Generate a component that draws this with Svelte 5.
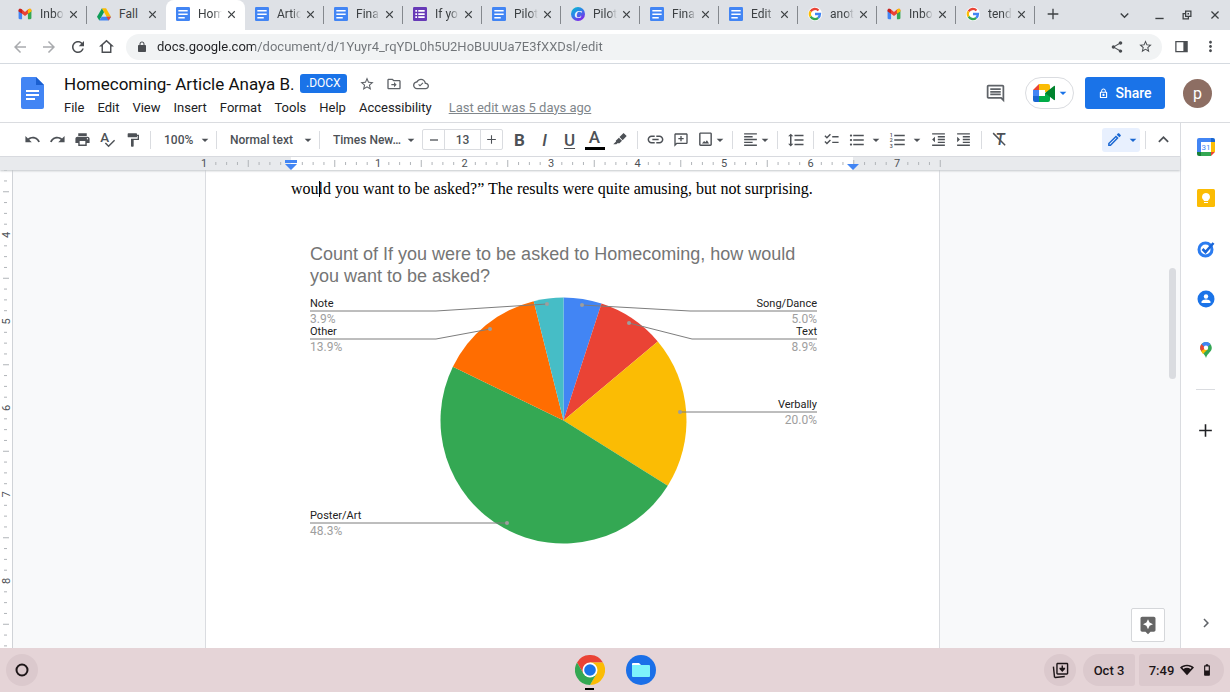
<script>
	let tabs = [
		{ icon: "gmail", name: "Inbo" },
		{ icon: "drive", name: "Fall" },
		{ icon: "doc", name: "Hom", active: true },
		{ icon: "doc", name: "Artic" },
		{ icon: "doc", name: "Fina" },
		{ icon: "form", name: "If yo" },
		{ icon: "doc", name: "Pilot" },
		{ icon: "canva", name: "Pilot" },
		{ icon: "doc", name: "Fina" },
		{ icon: "doc", name: "Edit" },
		{ icon: "google", name: "anot" },
		{ icon: "gmail", name: "Inbo" },
		{ icon: "google", name: "tend" }
	]
	let menus = ["File", "Edit", "View", "Insert", "Format", "Tools", "Help", "Accessibility"]
	let url = $state("docs.google.com/document/d/1Yuyr4_rqYDL0h5U2HoBUUUa7E3fXXDsl/edit")
	let title = $state("Homecoming- Article Anaya B.")
	let fontSize = $state(13)

	// 24px grid icons
	const paths = {
		back: "M20 11H7.83l5.59-5.59L12 4l-8 8 8 8 1.41-1.41L7.83 13H20v-2z",
		forward: "M12 4l-1.41 1.41L16.17 11H4v2h12.17l-5.58 5.59L12 20l8-8z",
		reload: "M17.65 6.35C16.2 4.9 14.21 4 12 4c-4.42 0-7.99 3.58-7.99 8s3.57 8 7.99 8c3.73 0 6.84-2.55 7.73-6h-2.08c-.82 2.33-3.04 4-5.65 4-3.31 0-6-2.69-6-6s2.69-6 6-6c1.66 0 3.14.69 4.22 1.78L13 11h7V4l-2.35 2.35z",
		home: "M12 2.5L1.5 12H5v9h14v-9h3.5L12 2.5zM12 5.2l5 4.6V19H7V9.8z",
		lock: "M18 8h-1V6c0-2.76-2.24-5-5-5S7 3.24 7 6v2H6c-1.1 0-2 .9-2 2v10c0 1.1.9 2 2 2h12c1.1 0 2-.9 2-2V10c0-1.1-.9-2-2-2zM9 6c0-1.66 1.34-3 3-3s3 1.34 3 3v2H9V6z",
		lockOpen: "M18 8h-1V6c0-2.76-2.24-5-5-5S7 3.24 7 6v2H6c-1.1 0-2 .9-2 2v10c0 1.1.9 2 2 2h12c1.1 0 2-.9 2-2V10c0-1.1-.9-2-2-2zM9 6c0-1.66 1.34-3 3-3s3 1.34 3 3v2H9V6zm8.5 13.5H6.5V10.5h11v9zM12 17.5c1.4 0 2.5-1.1 2.5-2.5s-1.1-2.5-2.5-2.5-2.5 1.1-2.5 2.5 1.1 2.5 2.5 2.5z",
		share: "M18 16.08c-.76 0-1.44.3-1.96.77L8.91 12.7c.05-.23.09-.46.09-.7s-.04-.47-.09-.7l7.05-4.11c.54.5 1.25.81 2.04.81 1.66 0 3-1.34 3-3s-1.34-3-3-3-3 1.34-3 3c0 .24.04.47.09.7L8.04 9.81C7.5 9.31 6.79 9 6 9c-1.66 0-3 1.34-3 3s1.34 3 3 3c.79 0 1.5-.31 2.04-.81l7.12 4.16c-.05.21-.08.43-.08.65 0 1.61 1.31 2.92 2.92 2.92s2.92-1.31 2.92-2.92-1.31-2.92-2.92-2.92z",
		star: "M22 9.24l-7.19-.62L12 2 9.19 8.63 2 9.24l5.46 4.73L5.82 21 12 17.27 18.18 21l-1.63-7.03L22 9.24zM12 15.4l-3.76 2.27 1-4.28-3.32-2.88 4.38-.38L12 6.1l1.71 4.04 4.38.38-3.32 2.88 1 4.28L12 15.4z",
		panel: "M2 3v18h20V3H2zm2 2h11v14H4V5z",
		dots: "M12 8c1.1 0 2-.9 2-2s-.9-2-2-2-2 .9-2 2 .9 2 2 2zm0 2c-1.1 0-2 .9-2 2s.9 2 2 2 2-.9 2-2-.9-2-2-2zm0 6c-1.1 0-2 .9-2 2s.9 2 2 2 2-.9 2-2-.9-2-2-2z",
		close: "M20 5.8L18.2 4 12 10.2 5.8 4 4 5.8 10.2 12 4 18.2 5.8 20 12 13.8 18.2 20 20 18.2 13.8 12z",
		plus: "M20 13h-7v7h-2v-7H4v-2h7V4h2v7h7v2z",
		minus: "M20 13.3H4v-2.6h16z",
		min: "M3 17h18v3H3z",
		restore: "M8 3v5H3v13h13v-5h5V3H8zm2.5 2.5h8v8h-8v-8zM5.5 10.5H8V16h5.5v2.5h-8v-8zM13 8v3h3V8z",
		down: "M16.59 8.59L12 13.17 7.41 8.59 6 10l6 6 6-6z",
		up: "M12 8l-6 6 1.41 1.41L12 10.83l4.59 4.58L18 14z",
		right: "M10 6L8.59 7.41 13.17 12l-4.58 4.59L10 18l6-6z",
		caret: "M2 8h20L12 18z",
		move: "M20 6h-8l-2-2H4c-1.1 0-2 .9-2 2v12c0 1.1.9 2 2 2h16c1.1 0 2-.9 2-2V8c0-1.1-.9-2-2-2zm0 12H4V6h5.17l2 2H20v10zm-8-1l4-4-4-4v3H8v2h4z",
		cloud: "M19.35 10.04C18.67 6.59 15.64 4 12 4 9.11 4 6.61 5.64 5.36 8.04 2.35 8.36 0 10.9 0 14c0 3.31 2.69 6 6 6h13c2.76 0 5-2.24 5-5 0-2.64-2.05-4.78-4.65-4.96zM19 18H6c-2.21 0-4-1.79-4-4 0-2.05 1.53-3.76 3.56-3.97l1.07-.11.5-.95C8.08 7.14 9.94 6 12 6c2.62 0 4.88 1.86 5.39 4.43l.3 1.5 1.53.11c1.56.1 2.78 1.41 2.78 2.96 0 1.65-1.35 3-3 3zm-8.5-4.5l-1.5-1.5-1.2 1.2 2.7 2.7 5-5-1.2-1.2z",
		comment: "M22 4c0-1.1-.9-2-2-2H4c-1.1 0-2 .9-2 2v12c0 1.1.9 2 2 2h14l4 4V4zM20 4v13.17L18.83 16H4V4h16zM6 12h12v2H6zm0-3h12v2H6zm0-3h12v2H6z",
		undo: "M12.5 8c-2.65 0-5.05.99-6.9 2.6L2 7v9h9l-3.62-3.62c1.39-1.16 3.16-1.88 5.12-1.88 3.54 0 6.55 2.31 7.6 5.5l2.37-.78C21.08 11.03 17.15 8 12.5 8z",
		redo: "M18.4 10.6C16.55 8.99 14.15 8 11.5 8c-4.65 0-8.58 3.03-9.96 7.22L3.9 16c1.05-3.19 4.05-5.5 7.6-5.5 1.95 0 3.73.72 5.12 1.88L13 16h9V7l-3.6 3.6z",
		print: "M19 8H5c-1.66 0-3 1.34-3 3v6h4v4h12v-4h4v-6c0-1.66-1.34-3-3-3zm-3 11H8v-5h8v5zm3-7c-.55 0-1-.45-1-1s.45-1 1-1 1 .45 1 1-.45 1-1 1zm-1-9H6v4h12V3z",
		paint: "M18 4V3c0-.55-.45-1-1-1H5c-.55 0-1 .45-1 1v4c0 .55.45 1 1 1h12c.55 0 1-.45 1-1V6h1v4H9v11c0 .55.45 1 1 1h2c.55 0 1-.45 1-1v-9h8V4h-3z",
		marker: "M6 14l5-5 5 5-4 4H8.5L7 19.5H2L6.5 15zM12 8l6.5-6.5 5 5L17 13z",
		link: "M3.9 12c0-1.71 1.39-3.1 3.1-3.1h4V7H7c-2.76 0-5 2.24-5 5s2.24 5 5 5h4v-1.9H7c-1.71 0-3.1-1.39-3.1-3.1zM8 13h8v-2H8v2zm9-6h-4v1.9h4c1.71 0 3.1 1.39 3.1 3.1s-1.39 3.1-3.1 3.1h-4V17h4c2.76 0 5-2.24 5-5s-2.24-5-5-5z",
		addComment: "M20 2H4c-1.1 0-2 .9-2 2v18l4-4h14c1.1 0 2-.9 2-2V4c0-1.1-.9-2-2-2zm0 14H5.2L4 17.2V4h16v12zM11 14h2v-3h3V9h-3V6h-2v3H8v2h3z",
		image: "M19 4v15H5V4h14m0-2H5c-1.1 0-2 .9-2 2v15c0 1.1.9 2 2 2h14c1.1 0 2-.9 2-2V4c0-1.1-.9-2-2-2zm-5 11l-2.2 2.8L10 14l-3 3.5h10z",
		align: "M15 15H3v2h12v-2zm0-8H3v2h12V7zM3 13h18v-2H3v2zm0 8h18v-2H3v2zM3 3v2h18V3H3z",
		spacing: "M6 7h2.5L5 3.5 1.5 7H4v10H1.5L5 20.5 8.5 17H6V7zm4-2v2h12V5H10zm0 14h12v-2H10v2zm0-6h12v-2H10v2z",
		checklist: "M22 7h-9v2h9V7zm0 8h-9v2h9v-2zM5.54 11L2 7.46l1.41-1.41 2.12 2.12 4.24-4.24 1.41 1.41L5.54 11zm0 8L2 15.46l1.41-1.41 2.12 2.12 4.24-4.24 1.41 1.41L5.54 19z",
		bullets: "M4 10.5c-.83 0-1.5.67-1.5 1.5s.67 1.5 1.5 1.5 1.5-.67 1.5-1.5-.67-1.5-1.5-1.5zm0-6c-.83 0-1.5.67-1.5 1.5S3.17 7.5 4 7.5 5.5 6.83 5.5 6 4.83 4.5 4 4.5zm0 12c-.83 0-1.5.68-1.5 1.5s.68 1.5 1.5 1.5 1.5-.68 1.5-1.5-.67-1.5-1.5-1.5zM7 19h14v-2H7v2zm0-6h14v-2H7v2zm0-8v2h14V5H7z",
		outdent: "M11 17h10v-2H11v2zm-8-5l4 4V8l-4 4zm0 9h18v-2H3v2zM3 3v2h18V3H3zm8 6h10V7H11v2zm0 4h10v-2H11v2z",
		indent: "M3 21h18v-2H3v2zM3 8v8l4-4-4-4zm8 9h10v-2H11v2zM3 3v2h18V3H3zm8 6h10V7H11v2zm0 4h10v-2H11v2z",
		edit: "M14.06 9.02l.92.92L5.92 19H5v-.92l9.06-9.06M17.66 3c-.25 0-.51.1-.7.29l-1.83 1.83 3.75 3.75 1.83-1.83c.39-.39.39-1.02 0-1.41l-2.34-2.34c-.2-.2-.45-.29-.71-.29zm-3.6 3.19L3 17.25V21h3.75L17.81 9.94l-3.75-3.75z",
		explore: "M19 2H5c-1.1 0-2 .9-2 2v14c0 1.1.9 2 2 2h4l3 3 3-3h4c1.1 0 2-.9 2-2V4c0-1.1-.9-2-2-2zm-5.1 10.9L12 17l-1.9-4.1L6 11l4.1-1.9L12 5l1.9 4.1L18 11z",
		wifi: "M12 21L0 7.5C3.2 4.8 7.3 3 12 3s8.800 1.800 12 4.500zM4 8l2 2.200c1.700-1.200 3.800-2 6-2s4.300.8 6 2L20 8c-2.300-1.600-5-2.500-8-2.500S6.300 6.400 4 8z",
		battery: "M15.7 4H14V2h-4v2H8.3C7.6 4 7 4.6 7 5.3v15.4c0 .7.6 1.3 1.3 1.3h7.4c.7 0 1.3-.6 1.3-1.3V5.3c0-.7-.6-1.3-1.3-1.3zM15 13H9V6h6z",
		tote: "M21 1H8C6.9 1 6 1.9 6 3v13c0 1.1.9 2 2 2h13c1.1 0 2-.9 2-2V3c0-1.1-.9-2-2-2zm0 15H8V3h13zM13.5 5v3H10.5v2l4 4 4-4V8h-3V5zM3 6.5L1 6.7l1.5 14.5c.1 1.1 1 1.8 2.1 1.7L18 21.5v-2L4.500 20.800z"
	}

	// rulers, one inch is 86.5px
	const inch = 86.5
	const kind = (eighth) => eighth % 8 == 0 ? "num" : eighth % 4 == 0 ? "mid" : "small"
	let hticks = []
	for (let i = 1; i <= 68; i++) {
		hticks.push({ pos: (i * inch) / 8, n: i / 8 - 1, kind: kind(i) })
	}
	let vticks = []
	for (let i = 26; i < 120; i++) {
		vticks.push({ pos: (i * inch) / 8 - 281, n: i / 8, kind: kind(i) })
	}

	// pie chart
	const cx = 272.5, cy = 188.5, r = 123
	let answers = [
		{ name: "Song/Dance", value: 5.0, color: "#4285f4", y: 79, line: "526,79 399,79 291,73" },
		{ name: "Text", value: 8.9, color: "#ea4335", y: 107, line: "526,107 401,107 338,91" },
		{ name: "Verbally", value: 20.0, color: "#fbbc04", y: 180, line: "526,180 389,180" },
		{ name: "Poster/Art", value: 48.3, color: "#34a853", y: 291, left: true, line: "19,291 216,291" },
		{ name: "Other", value: 13.9, color: "#ff6d01", y: 107, left: true, line: "19,107 145,107 199,97" },
		{ name: "Note", value: 3.9, color: "#46bdc6", y: 79, left: true, line: "19,79 145,79 256,72" }
	]
	const point = (part) => {
		let a = part * 2 * Math.PI
		return `${cx + r * Math.sin(a)} ${cy - r * Math.cos(a)}`
	}
	let sum = 0
	let slices = answers.map((a) => {
		let from = sum / 100
		sum += a.value
		return { ...a, d: `M${cx} ${cy}L${point(from)}A${r} ${r} 0 0 1 ${point(sum / 100)}Z`, dot: a.line.split(" ").pop().split(",") }
	})
</script>

<style>
	:global(body) {
		margin: 0;
		font-family: Roboto, "Liberation Sans", sans-serif;
		color: #202124;
	}
	svg {
		display: block;
		flex: none;
		fill: currentColor;
	}
	button, input, select {
		font: inherit;
		color: inherit;
		background: none;
		border: 0;
		padding: 0;
		margin: 0;
		outline: none;
	}
	button {
		display: flex;
		align-items: center;
		justify-content: center;
		flex: none;
		cursor: pointer;
	}
	input {
		min-width: 0;
	}
	.screen {
		height: 100vh;
		display: flex;
		flex-direction: column;
		overflow: hidden;
		background-color: #fff;
	}

	/* browser */
	.tabs {
		height: 30px;
		display: flex;
		flex: none;
		padding-left: 8px;
		background-color: #dee1e6;
		color: #3c4043;
	}
	.tab {
		box-sizing: border-box;
		width: 79px;
		display: flex;
		flex: none;
		align-items: center;
		padding: 0 0 2px 10px;
		font-size: 12px;
		background: linear-gradient(#84888d, #84888d) right center / 1px 18px no-repeat;
	}
	.tab.before {
		background: none;
	}
	.tab.active {
		background: #fff;
		border-radius: 8px 8px 0 0;
	}
	.tab_name {
		width: 24px;
		margin: 0 4px 0 8px;
		white-space: nowrap;
		mask-image: linear-gradient(90deg, #000 15px, transparent);
	}
	.tab_name.full {
		mask-image: none;
	}
	.new_tab {
		width: 36px;
		padding-bottom: 2px;
	}
	.window {
		display: flex;
		margin: 0 1px 0 auto;
	}
	.window button {
		width: 28px;
	}
	.window button:first-child {
		margin-right: 7px;
	}
	.address_bar {
		height: 33px;
		display: flex;
		flex: none;
		align-items: center;
		padding: 0 5px;
		border-bottom: 1px solid #d5dae0;
		color: #4a4d51;
	}
	.address_bar > button {
		width: 29px;
	}
	.address_bar > button:disabled {
		color: #a9abae;
	}
	.address {
		flex: 1;
		height: 26px;
		display: flex;
		align-items: center;
		margin: 0 5px;
		padding: 0 2px 0 10px;
		border-radius: 13px;
		background-color: #f1f3f4;
	}
	.address input {
		flex: 1;
		margin-left: 9px;
		font-size: 13px;
		background: linear-gradient(90deg, #202124 98px, #707478 98px);
		background-clip: text;
		color: transparent;
	}
	.address button {
		width: 29px;
	}

	/* document header */
	.header {
		height: 58px;
		display: flex;
		flex: none;
		align-items: center;
		padding: 0 18px 0 21px;
		border-bottom: 1px solid #dadce0;
	}
	.names {
		flex: 1;
		margin: 4px 0 0 20px;
	}
	.title_row {
		height: 24px;
		display: flex;
		align-items: center;
		color: #5f6368;
	}
	.title_row input {
		width: 236px;
		font-size: 17px;
		color: #111;
	}
	.title_row button {
		width: 27px;
	}
	.badge {
		height: 19px;
		line-height: 19px;
		padding: 0 6px;
		margin-right: 7px;
		border-radius: 3px;
		background-color: #1a73e8;
		color: #fff;
		font-size: 12px;
	}
	.menu_row {
		height: 23px;
		display: flex;
		align-items: center;
		gap: 13px;
		font-size: 13px;
	}
	.menu_row a {
		margin-left: 4px;
		color: #80868b;
	}
	.comments {
		color: #5f6368;
	}
	.meet {
		width: 49px;
		height: 32px;
		gap: 4px;
		margin: 0 11px 0 19px;
		border: 1px solid #dadce0;
		border-radius: 16px;
		color: #1a73e8;
		box-sizing: border-box;
	}
	.share {
		width: 80px;
		height: 32px;
		gap: 6px;
		border-radius: 3px;
		background-color: #1a73e8;
		color: #fff;
		font-size: 14px;
		font-weight: 500;
	}
	.avatar {
		width: 29px;
		height: 29px;
		margin-left: 18px;
		border-radius: 50%;
		background-color: #8d6e63;
		color: #fff;
		font-size: 16px;
	}

	/* toolbar */
	.work {
		flex: 1;
		display: flex;
		min-height: 0;
	}
	.editor {
		flex: 1;
		display: flex;
		flex-direction: column;
		min-width: 0;
		position: relative;
	}
	.toolbar {
		height: 33px;
		display: flex;
		flex: none;
		align-items: center;
		padding: 0 4px 0 20px;
		border-bottom: 1px solid #dadce0;
		color: #4d5156;
		font-size: 12px;
		font-weight: 500;
	}
	.toolbar button {
		width: 25px;
		height: 24px;
	}
	.toolbar .more {
		width: 14px;
		margin-left: -5px;
	}
	.toolbar .more.far {
		margin: 0 2px 0 0;
	}
	.toolbar .letter {
		font-size: 17px;
		line-height: 20px;
	}
	.letter u {
		text-underline-offset: 2px;
	}
	.letter .ink {
		width: 20px;
		height: 17px;
		line-height: 15px;
		border-bottom: 3px solid #000;
	}
	.sep {
		width: 1px;
		height: 18px;
		flex: none;
		margin: 0 5px;
		background-color: #dadce0;
	}
	.drop {
		width: 92px;
		display: flex;
		align-items: center;
		position: relative;
	}
	.drop.zoom {
		width: 55px;
	}
	.drop select {
		width: 100%;
		appearance: none;
		padding-left: 8px;
	}
	.drop svg {
		position: absolute;
		right: 2px;
		pointer-events: none;
	}
	.size {
		display: flex;
		margin: 0 4px 0 5px;
		border: 1px solid #dadce0;
		border-radius: 2px;
	}
	.size button {
		width: 21px;
		height: 19px;
	}
	.size input {
		width: 35px;
		text-align: center;
		border: solid #dadce0;
		border-width: 0 1px;
	}
	.toolbar .mode {
		width: 38px;
		gap: 6px;
		margin-left: auto;
		border-radius: 3px;
		background-color: #e8f0fe;
		color: #1967d2;
	}

	/* rulers and page */
	.ruler {
		height: 13px;
		display: flex;
		flex: none;
		justify-content: center;
		padding: 0 48px 0 13px;
		background-color: #e8eaed;
		box-shadow: 0 1px 2px #c4c7cb;
		z-index: 1;
	}
	.ruler svg, .side_ruler svg {
		overflow: visible;
	}
	.tick {
		stroke: #b0b4b8;
	}
	.number {
		font-size: 11px;
		text-anchor: middle;
		fill: #4d5156;
	}
	.canvas {
		flex: 1;
		display: flex;
		min-height: 0;
		background-color: #f8f9fa;
	}
	.side_ruler {
		width: 12px;
		flex: none;
		overflow: hidden;
		border-right: 1px solid #d0d3d7;
		background-color: #fff;
	}
	.paper {
		flex: 1;
		display: flex;
		justify-content: center;
		padding-right: 48px;
		overflow: hidden;
	}
	.page {
		box-sizing: border-box;
		width: 735px;
		flex: none;
		padding: 9px 85px 0 85px;
		border: solid #dadce0;
		border-width: 0 1px;
		background-color: #fff;
	}
	.page p {
		margin: 0;
		font: 16px/20px "Liberation Serif", serif;
		color: #000;
		white-space: nowrap;
	}
	.cursor {
		display: inline-block;
		width: 1px;
		height: 16px;
		margin-right: -1px;
		vertical-align: -3px;
		background-color: #000;
	}
	.chart {
		margin: 33px 0 0;
		display: grid;
	}
	.chart figcaption, .chart svg {
		grid-area: 1 / 1;
	}
	.chart figcaption {
		padding: 11px 40px 11px 19px;
		font-size: 18px;
		line-height: 22px;
		font-family: "Liberation Sans", Arial, sans-serif;
		color: #757575;
	}
	.chart text {
		font-size: 11px;
		fill: #222;
	}
	.chart .percent {
		font-size: 12px;
		fill: #9e9e9e;
	}
	.chart .end {
		text-anchor: end;
	}
	.leader {
		fill: none;
		stroke: #7d7d7d;
	}
	.dot {
		fill: #9e9e9e;
	}
	.scroll {
		position: absolute;
		top: 145px;
		right: 4px;
		width: 7px;
		height: 111px;
		border-radius: 4px;
		background-color: #dadce0;
	}
	.explore {
		position: absolute;
		right: 15px;
		bottom: 6px;
		width: 34px;
		height: 34px;
		border: 1px solid #d5d7da;
		border-radius: 2px;
		background-color: #fff;
		color: #666;
	}
	.side {
		width: 49px;
		flex: none;
		display: flex;
		flex-direction: column;
		align-items: center;
		border-left: 1px solid #dadce0;
	}
	.apps {
		height: 227px;
		display: flex;
		flex-direction: column;
		justify-content: space-between;
		margin-top: 12px;
	}
	.side button {
		width: 24px;
		height: 24px;
	}
	.side hr {
		width: 19px;
		margin: 27px 0 28px;
		border: 0;
		border-top: 1px solid #dadce0;
	}
	.side .collapse {
		margin: auto 0 13px;
		color: #5f6368;
	}

	/* shelf */
	.shelf {
		height: 44px;
		display: grid;
		grid-template-columns: 1fr auto 1fr;
		flex: none;
		align-items: center;
		padding: 0 6px;
		background-color: #e5d4d7;
		color: #1d1618;
		font-size: 13px;
		font-weight: 500;
	}
	.shelf button {
		height: 32px;
		background-color: #dbc9cd;
	}
	.round {
		width: 32px;
		border-radius: 50%;
	}
	.pinned {
		display: flex;
		gap: 19px;
	}
	.shelf .pinned button {
		position: relative;
		background: none;
	}
	.open {
		position: absolute;
		bottom: -4px;
		width: 9px;
		height: 2px;
		background-color: #000;
	}
	.status {
		display: flex;
		justify-content: flex-end;
	}
	.date {
		width: 52px;
		margin: 0 4px 0 7px;
		border-radius: 16px 3px 3px 16px;
	}
	.time {
		width: 85px;
		gap: 6px;
		border-radius: 3px 16px 16px 3px;
	}
</style>

{#snippet icon(name, size)}
	<svg width={size} height={size} viewBox="0 0 24 24" aria-hidden="true"><path fill-rule="evenodd" d={paths[name]} /></svg>
{/snippet}

{#snippet favicon(name)}
	<svg width="14" height="14" viewBox="0 0 24 24" aria-hidden="true">
		{#if name == "gmail"}
			<path fill="#4285f4" d="M1 6v13c0 1 .7 2 2 2h4V10z" />
			<path fill="#34a853" d="M23 6v13c0 1-.7 2-2 2h-4V10z" />
			<path fill="#ea4335" d="M1 6c0-3 3-4 5.5-2L12 8.5 17.5 4C20 2 23 3 23 6l-1 1.5-10 8-10-8z" />
			<path fill="#c5221f" d="M1 6c0-3 3.5-4 6-1.5V11L1 7.5z" />
			<path fill="#fbbc04" d="M23 6c0-3-3.5-4-6-1.5V11l6-3.5z" />
		{:else if name == "drive"}
			<path fill="#0f9d58" d="M8.5 2L0 16.5 4 23l8.2-14.5z" />
			<path fill="#fbbc04" d="M8.5 2h7L24 16.5h-7.5z" />
			<path fill="#4285f4" d="M4 23l4-6.5h16L20 23z" />
			<path fill="#ea4335" d="M24 16.5L20 23l-4-6.5z" />
		{:else if name == "doc"}
			<rect width="24" height="24" rx="2" fill="#4285f4" />
			<path fill="#fff" d="M4 5h16v2.5H4zM4 11h16v2.5H4zM4 17h11v2.5H4z" />
		{:else if name == "form"}
			<rect width="24" height="24" rx="2" fill="#673ab7" />
			<path fill="#fff" d="M4 5h3v3H4zM9 5h11v3H9zM4 10.5h3v3H4zM9 10.5h11v3H9zM4 16h3v3H4zM9 16h11v3H9z" />
		{:else if name == "canva"}
			<defs>
				<linearGradient id="canva" x1="0" y1="0" x2="0.6" y2="1">
					<stop offset="0" stop-color="#00c4cc" />
					<stop offset="0.5" stop-color="#2f80e8" />
					<stop offset="1" stop-color="#7d2ae8" />
				</linearGradient>
			</defs>
			<circle cx="12" cy="12" r="12" fill="url(#canva)" />
			<text x="12" y="18" text-anchor="middle" font-size="18" font-style="italic" font-weight="700" font-family="Liberation Serif, serif" fill="#fff">C</text>
		{:else}
			<circle cx="12" cy="12" r="12" fill="#fff" />
			<g fill="none" stroke-width="4">
				<path stroke="#ea4335" d="M4.5 7.5A8.5 8.5 0 0 1 18 6" />
				<path stroke="#fbbc04" d="M4.5 7.5A8.5 8.5 0 0 0 4.5 16.5" />
				<path stroke="#34a853" d="M4.5 16.5A8.5 8.5 0 0 0 17.5 18.5" />
				<path stroke="#4285f4" d="M17.5 18.5A8.5 8.5 0 0 0 20.5 12H12" />
			</g>
		{/if}
	</svg>
{/snippet}

<div class="screen">
	<div class="tabs">
		{#each tabs as tab, i}
		<div class="tab" class:active={tab.active} class:before={tabs[i + 1]?.active}>
			{@render favicon(tab.icon)}
			<span class="tab_name" class:full={tab.name == "Fall"}>{tab.name}</span>
			<button aria-label="Close tab">{@render icon("close", 11)}</button>
		</div>
		{/each}
		<button class="new_tab" aria-label="New tab">{@render icon("plus", 16)}</button>
		<div class="window">
			<button aria-label="Search tabs">{@render icon("down", 17)}</button>
			<button aria-label="Minimize">{@render icon("min", 11)}</button>
			<button aria-label="Restore">{@render icon("restore", 12)}</button>
			<button aria-label="Close">{@render icon("close", 12)}</button>
		</div>
	</div>

	<div class="address_bar">
		<button aria-label="Back" disabled>{@render icon("back", 18)}</button>
		<button aria-label="Forward" disabled>{@render icon("forward", 18)}</button>
		<button aria-label="Reload">{@render icon("reload", 18)}</button>
		<button aria-label="Home">{@render icon("home", 17)}</button>
		<div class="address">
			{@render icon("lock", 12)}
			<input type="text" aria-label="Address" bind:value={url} />
			<button aria-label="Share this page">{@render icon("share", 14)}</button>
			<button aria-label="Bookmark">{@render icon("star", 15)}</button>
		</div>
		<button aria-label="Side panel">{@render icon("panel", 15)}</button>
		<button aria-label="Menu">{@render icon("dots", 17)}</button>
	</div>

	<div class="header">
		<svg width="23" height="32" viewBox="0 0 23 32" aria-hidden="true">
			<path fill="#4285f4" d="M2 0h13l8 8v22a2 2 0 0 1-2 2H2a2 2 0 0 1-2-2V2a2 2 0 0 1 2-2z" />
			<path fill="#1a5fd0" d="M15 0l8 8h-8z" />
			<path fill="#fff" d="M5 13h13v2H5zM5 17h13v2H5zM5 21h9v2H5z" />
		</svg>
		<div class="names">
			<div class="title_row">
				<input type="text" aria-label="Document title" bind:value={title} />
				<span class="badge">.DOCX</span>
				<button aria-label="Star">{@render icon("star", 16)}</button>
				<button aria-label="Move">{@render icon("move", 16)}</button>
				<button aria-label="Saved to Drive">{@render icon("cloud", 16)}</button>
			</div>
			<div class="menu_row">
				{#each menus as menu}
				<button>{menu}</button>
				{/each}
				<a href="#history">Last edit was 5 days ago</a>
			</div>
		</div>
		<button class="comments" aria-label="Comments">{@render icon("comment", 21)}</button>
		<button class="meet" aria-label="Meet">
			<svg width="22" height="18" viewBox="0 0 22 18" aria-hidden="true">
				<path fill="#ea4335" d="M0 6l6-6v6z" />
				<path fill="#4285f4" d="M0 6h6v6H0z" />
				<path fill="#1967d2" d="M0 12h6v6H2a2 2 0 0 1-2-2z" />
				<path fill="#fbbc04" d="M6 0h9a2 2 0 0 1 2 2v6h-5V6H6z" />
				<path fill="#00ac47" d="M6 12h6V9h5v7a2 2 0 0 1-2 2H6z" />
				<path fill="#00832d" d="M12 9l9-7c.5-.4 1 0 1 .5v13c0 .5-.5.9-1 .5z" />
			</svg>
			{@render icon("caret", 8)}
		</button>
		<button class="share">{@render icon("lockOpen", 11)}Share</button>
		<button class="avatar">p</button>
	</div>

	<div class="work">
		<div class="editor">
			<div class="toolbar">
				<button aria-label="Undo">{@render icon("undo", 17)}</button>
				<button aria-label="Redo">{@render icon("redo", 17)}</button>
				<button aria-label="Print">{@render icon("print", 17)}</button>
				<button aria-label="Spelling">
					<svg width="17" height="17" viewBox="0 0 24 24" aria-hidden="true">
						<text x="8" y="16" text-anchor="middle" font-size="19">A</text>
						<path fill="none" stroke="currentColor" stroke-width="2" d="M9 17l4.5 4.5L22 13" />
					</svg>
				</button>
				<button aria-label="Paint format">{@render icon("paint", 16)}</button>
				<div class="sep"></div>
				<div class="drop zoom">
					<select aria-label="Zoom"><option>100%</option></select>
					{@render icon("caret", 8)}
				</div>
				<div class="sep"></div>
				<div class="drop">
					<select aria-label="Style"><option>Normal text</option></select>
					{@render icon("caret", 8)}
				</div>
				<div class="sep"></div>
				<div class="drop">
					<select aria-label="Font"><option>Times New…</option></select>
					{@render icon("caret", 8)}
				</div>
				<div class="size">
					<button aria-label="Smaller" onclick={() => fontSize--}>{@render icon("minus", 12)}</button>
					<input type="text" aria-label="Font size" bind:value={fontSize} />
					<button aria-label="Larger" onclick={() => fontSize++}>{@render icon("plus", 13)}</button>
				</div>
				<button class="letter" aria-label="Bold"><b>B</b></button>
				<button class="letter" aria-label="Italic"><i>I</i></button>
				<button class="letter" aria-label="Underline"><u>U</u></button>
				<button class="letter" aria-label="Text color"><span class="ink">A</span></button>
				<button aria-label="Highlight">{@render icon("marker", 15)}</button>
				<div class="sep"></div>
				<button aria-label="Link">{@render icon("link", 19)}</button>
				<button aria-label="Add comment">{@render icon("addComment", 16)}</button>
				<button aria-label="Image">{@render icon("image", 17)}</button>
				<button class="more" aria-label="Image options">{@render icon("caret", 8)}</button>
				<div class="sep"></div>
				<button aria-label="Align">{@render icon("align", 17)}</button>
				<button class="more" aria-label="Align options">{@render icon("caret", 8)}</button>
				<div class="sep"></div>
				<button aria-label="Line spacing">{@render icon("spacing", 18)}</button>
				<div class="sep"></div>
				<button aria-label="Checklist">{@render icon("checklist", 17)}</button>
				<button aria-label="Bulleted list">{@render icon("bullets", 18)}</button>
				<button class="more far" aria-label="Bullet options">{@render icon("caret", 8)}</button>
				<button aria-label="Numbered list">
					<svg width="18" height="18" viewBox="0 0 24 24" aria-hidden="true">
						<path d="M7 5v2h14V5zM7 11v2h14v-2zM7 17v2h14v-2z" />
						<text x="1" y="8" font-size="7">1</text>
						<text x="1" y="15" font-size="7">2</text>
						<text x="1" y="22" font-size="7">3</text>
					</svg>
				</button>
				<button class="more far" aria-label="Number options">{@render icon("caret", 8)}</button>
				<button aria-label="Decrease indent">{@render icon("outdent", 17)}</button>
				<button aria-label="Increase indent">{@render icon("indent", 17)}</button>
				<div class="sep"></div>
				<button aria-label="Clear formatting">
					<svg width="17" height="17" viewBox="0 0 24 24" aria-hidden="true">
						<text x="13" y="20" text-anchor="middle" font-size="22" font-style="italic">T</text>
						<path fill="none" stroke="currentColor" stroke-width="2" d="M3 3l17 17" />
					</svg>
				</button>
				<button class="mode" aria-label="Editing mode">{@render icon("edit", 17)}{@render icon("caret", 8)}</button>
				<div class="sep"></div>
				<button aria-label="Hide menus">{@render icon("up", 21)}</button>
			</div>

			<div class="ruler">
				<svg width="735" height="13" aria-hidden="true">
					<rect x="86" width="562" height="13" fill="#fff" />
					<text class="number" x="-1" y="10">1</text>
					{#each hticks as t}
					{#if t.kind != "num"}
					<path class="tick" d={t.kind == "mid" ? `M${t.pos} 3v7` : `M${t.pos} 5v3`} />
					{:else if t.n > 0}
					<text class="number" x={t.pos} y="10">{t.n}</text>
					{/if}
					{/each}
					<path fill="#4285f4" d="M80 3h12v3H80zM80 7h12l-6 6zM642 7h12l-6 6z" />
				</svg>
			</div>

			<div class="canvas">
				<div class="side_ruler">
					<svg width="12" height="100%" aria-hidden="true">
						{#each vticks as t}
						{#if t.kind == "num"}
						<text class="number" transform={`translate(10 ${t.pos}) rotate(-90)`}>{t.n}</text>
						{:else}
						<path class="tick" d={t.kind == "mid" ? `M3 ${t.pos}h6` : `M4 ${t.pos}h3`} />
						{/if}
						{/each}
					</svg>
				</div>
				<div class="paper">
					<div class="page">
						<p>wou<span class="cursor"></span>ld you want to be asked?” The results were quite amusing, but not surprising.</p>
						<figure class="chart">
							<figcaption>Count of If you were to be asked to Homecoming, how would you want to be asked?</figcaption>
							<svg width="546" height="330" role="img" aria-label="Pie chart of the answers">
								{#each slices as s}
								<path fill={s.color} d={s.d} />
								{/each}
								{#each slices as s}
								<polyline class="leader" points={s.line} />
								<circle class="dot" cx={s.dot[0]} cy={s.dot[1]} r="2" />
								<text class:end={!s.left} x={s.left ? 19 : 526} y={s.y - 4}>{s.name}</text>
								<text class="percent" class:end={!s.left} x={s.left ? 19 : 526} y={s.y + 12}>{s.value.toFixed(1)}%</text>
								{/each}
							</svg>
						</figure>
					</div>
				</div>
			</div>
			<div class="scroll"></div>
			<button class="explore" aria-label="Explore">{@render icon("explore", 20)}</button>
		</div>

		<div class="side">
			<div class="apps">
				<button aria-label="Calendar">
					<svg width="18" height="18" viewBox="0 0 18 18" aria-hidden="true">
						<path fill="#4285f4" d="M2 0h12v4H4v10H0V2a2 2 0 0 1 2-2z" />
						<path fill="#1967d2" d="M14 0h2a2 2 0 0 1 2 2v2h-4z" />
						<path fill="#fbbc04" d="M14 4h4v10h-4z" />
						<path fill="#34a853" d="M4 14h10v4H4z" />
						<path fill="#188038" d="M0 14h4v4H2a2 2 0 0 1-2-2z" />
						<path fill="#ea4335" d="M14 14h4l-4 4z" />
						<path fill="#fff" d="M4 4h10v10H4z" />
						<text x="9" y="12" text-anchor="middle" font-size="8" fill="#4285f4">31</text>
					</svg>
				</button>
				<button aria-label="Keep">
					<svg width="18" height="18" viewBox="0 0 18 18" aria-hidden="true">
						<rect width="18" height="18" rx="1.5" fill="#fbbc04" />
						<path fill="#fff" d="M9 4a4 4 0 0 0-2.2 7.3V12h4.4v-.7A4 4 0 0 0 9 4zM7 13h4v1H7z" />
					</svg>
				</button>
				<button aria-label="Tasks">
					<svg width="18" height="18" viewBox="0 0 18 18" aria-hidden="true">
						<circle cx="8.5" cy="9.5" r="6.5" fill="none" stroke="#2b7cf0" stroke-width="3" />
						<path fill="none" stroke="#1a66d8" stroke-width="2.6" d="M5.5 9l3 3L16.5 3" />
					</svg>
				</button>
				<button aria-label="Contacts">
					<svg width="18" height="18" viewBox="0 0 18 18" aria-hidden="true">
						<circle cx="9" cy="9" r="8.5" fill="#1a73e8" />
						<circle cx="9" cy="6.5" r="2.2" fill="#fff" />
						<path fill="#fff" d="M4.5 13v-1c0-1.6 3-2.4 4.5-2.4s4.5.8 4.5 2.4v1z" />
					</svg>
				</button>
				<button aria-label="Maps">
					<svg width="12" height="16" viewBox="0 0 12 16" aria-hidden="true">
						<path fill="#34a853" d="M6 0a5.8 5.8 0 0 1 5.8 5.8C11.8 10 7.5 11 6 16 5 12 .2 10 .2 5.8A5.8 5.8 0 0 1 6 0z" />
						<path fill="#fbbc04" d="M1 9l6-6 1 4-5 5z" />
						<path fill="#ea4335" d="M1.6 2L6 6 1.2 9A6 6 0 0 1 1.6 2z" />
						<path fill="#4285f4" d="M1.6 2A5.8 5.8 0 0 1 10.5 2L6 7z" />
						<circle cx="6" cy="5.8" r="2.2" fill="#fff" />
					</svg>
				</button>
			</div>
			<hr />
			<button aria-label="Get add-ons">{@render icon("plus", 19)}</button>
			<button class="collapse" aria-label="Hide side panel">{@render icon("right", 18)}</button>
		</div>
	</div>

	<div class="shelf">
		<button class="round" aria-label="Launcher">
			<svg width="14" height="14" viewBox="0 0 14 14" aria-hidden="true"><circle cx="7" cy="7" r="5.5" fill="none" stroke="currentColor" stroke-width="2" /></svg>
		</button>
		<div class="pinned">
			<button class="round" aria-label="Chrome">
				<svg width="30" height="30" viewBox="0 0 30 30" aria-hidden="true">
					<path fill="#ea4335" d="M2 7.5A15 15 0 0 1 28 7.5H15L8.5 18.7z" />
					<path fill="#fbbc04" d="M28 7.5A15 15 0 0 1 15 30L21.5 18.7 15 7.5z" />
					<path fill="#34a853" d="M15 30A15 15 0 0 1 2 7.5L8.5 18.7H21.5z" />
					<circle cx="15" cy="15" r="7.5" fill="#fff" />
					<circle cx="15" cy="15" r="5.8" fill="#1a73e8" />
				</svg>
				<span class="open"></span>
			</button>
			<button class="round" aria-label="Files">
				<svg width="30" height="30" viewBox="0 0 30 30" aria-hidden="true">
					<circle cx="15" cy="15" r="15" fill="#1a6fe8" />
					<path fill="#fff" d="M6 9a1 1 0 0 1 1-1h6l2 2v3H6z" />
					<path fill="#7df3fb" d="M6 10h17a1 1 0 0 1 1 1v10a1 1 0 0 1-1 1H7a1 1 0 0 1-1-1z" />
				</svg>
			</button>
		</div>
		<div class="status">
			<button class="round" aria-label="Tote">{@render icon("tote", 17)}</button>
			<button class="date">Oct 3</button>
			<button class="time">7:49{@render icon("wifi", 14)}{@render icon("battery", 14)}</button>
		</div>
	</div>
</div>
